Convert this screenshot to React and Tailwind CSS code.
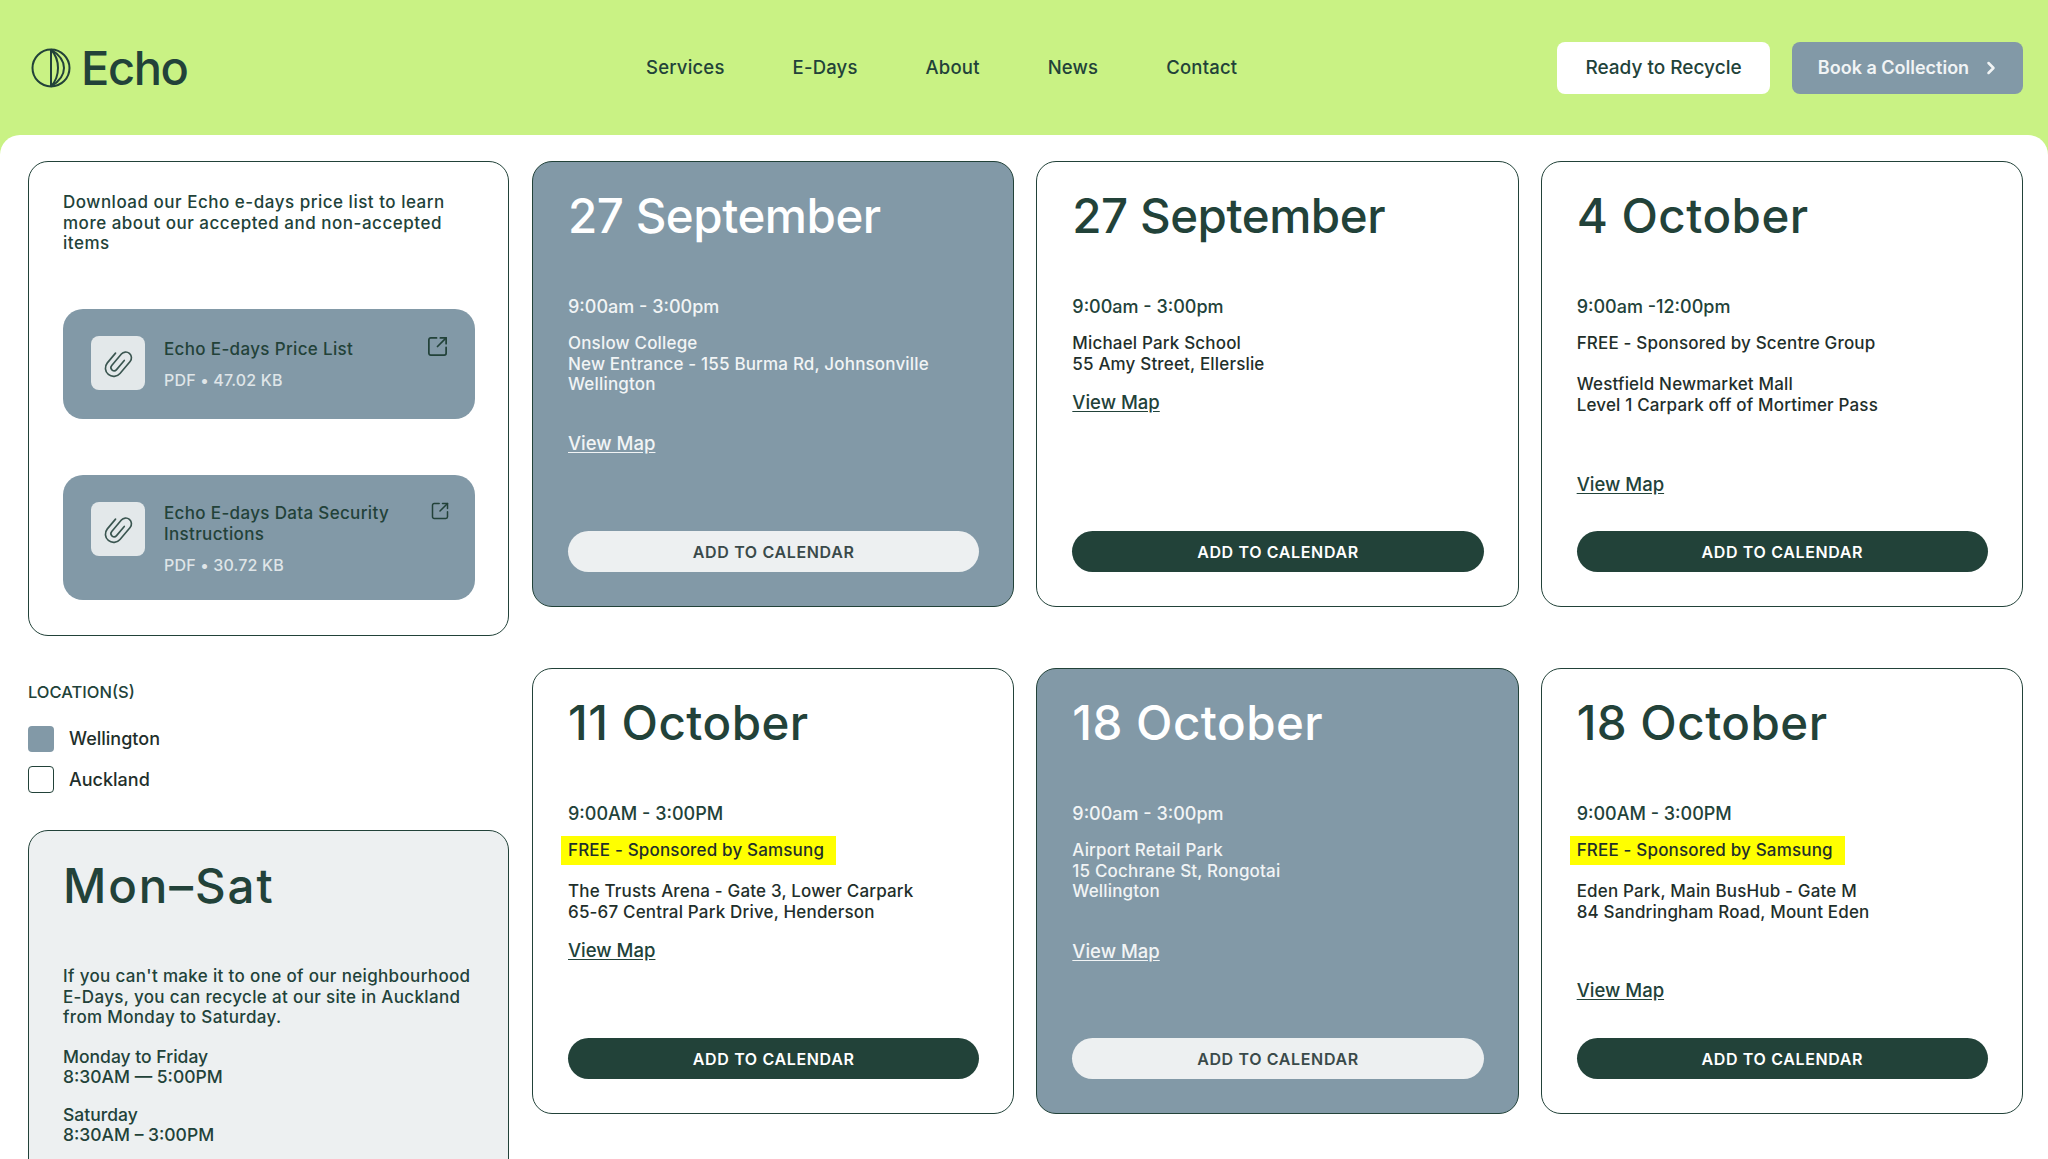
import { ChevronRight, SquareArrowOutUpRight } from 'lucide-react'

const navLinks = ['Services', 'E-Days', 'About', 'News', 'Contact']

const events = [
  {
    date: '27 September',
    time: '9:00am - 3:00pm',
    address: ['Onslow College', 'New Entrance - 155 Burma Rd, Johnsonville', 'Wellington'],
    mapGap: 'mt-[38px]',
    tinted: true,
  },
  {
    date: '27 September',
    time: '9:00am - 3:00pm',
    address: ['Michael Park School', '55 Amy Street, Ellerslie'],
    mapGap: 'mt-[18px]',
  },
  {
    date: '4 October',
    time: '9:00am -12:00pm',
    sponsor: 'FREE - Sponsored by Scentre Group',
    address: ['Westfield Newmarket Mall', 'Level 1 Carpark off of Mortimer Pass'],
    mapGap: 'mt-[59px]',
  },
  {
    date: '11 October',
    time: '9:00AM - 3:00PM',
    sponsor: 'FREE - Sponsored by Samsung',
    highlight: true,
    address: ['The Trusts Arena - Gate 3, Lower Carpark', '65-67 Central Park Drive, Henderson'],
    mapGap: 'mt-[18px]',
  },
  {
    date: '18 October',
    time: '9:00am - 3:00pm',
    address: ['Airport Retail Park', '15 Cochrane St, Rongotai', 'Wellington'],
    mapGap: 'mt-[39px]',
    tinted: true,
  },
  {
    date: '18 October',
    time: '9:00AM - 3:00PM',
    sponsor: 'FREE - Sponsored by Samsung',
    highlight: true,
    address: ['Eden Park, Main BusHub - Gate M', '84 Sandringham Road, Mount Eden'],
    mapGap: 'mt-[58px]',
  },
]

const Logo = () => (
  <svg width="40" height="40" viewBox="0 0 40 40" fill="none" stroke="#224239" strokeWidth="2">
    <circle cx="20" cy="20" r="18.5" />
    <path d="M20 1.5V38.5" />
    <path d="M20 1.5C25 7 27 13 27 20C27 27 25 33 20 38.5" />
    <path d="M20 1.5C29 7 33 13 33 20C33 27 29 33 20 38.5" />
  </svg>
)

const ClipIcon = () => (
  <svg width="36" height="36" viewBox="0 0 24 24" fill="none" stroke="#3a5550" strokeWidth="1.1" strokeLinecap="round">
    <path transform="rotate(40 12 12)" d="M6.5 8V16.5a5.5 5.5 0 0 0 11 0V6a3.8 3.8 0 0 0 -7.6 0V16a2.1 2.1 0 0 0 4.2 0V8" />
  </svg>
)

const DocCard = ({ title, meta, className, textClass, iconClass, iconSize }) => (
  <div className={`flex items-start bg-[#8299a7] rounded-[20px] pl-7 pr-[25px] pt-[27px] ${className}`}>
    <div className="w-[54px] h-[54px] shrink-0 rounded-lg bg-[#e3e8ea] flex items-center justify-center">
      <ClipIcon />
    </div>
    <div className={`ml-[19px] flex-1 min-w-0 ${textClass}`}>
      <p className="text-[17px] leading-[21px] font-medium tracking-[0.02em] text-[#224239]">{title}</p>
      <p className="text-[16px] leading-5 font-medium tracking-[0.01em] text-[#dfe5e8] mt-[10px]">{meta}</p>
    </div>
    <SquareArrowOutUpRight size={iconSize} strokeWidth={1.8} className={`text-[#224239] shrink-0 -mt-[1px] ${iconClass}`} />
  </div>
)

const EventCard = ({ event }) => {
  const { date, time, sponsor, highlight, address, mapGap, tinted } = event
  const bodyColor = tinted ? 'text-[#f1f4f5]' : 'text-[#1f2f2b]'
  const titleTracking = date.includes('October') ? 'tracking-[0.01em]' : 'tracking-[-0.01em]'

  return (
    <div className={`h-[446px] flex flex-col rounded-[20px] border border-[#224239] pl-[35px] pr-[34px] pb-[34px] pt-[26px]
      ${tinted ? 'bg-[#8299a7]' : 'bg-white'}`}>
      <h2 className={`text-[47.5px] leading-[56px] font-medium ${titleTracking} ${tinted ? 'text-white' : 'text-[#224239]'}`}>
        {date}
      </h2>
      <p className={`mt-[52px] text-[18px] leading-[21px] font-medium ${tinted ? 'text-[#f1f4f5]' : 'text-[#224239]'}`}>
        {time}
      </p>
      {sponsor && (
        <p className={`mt-[16px] text-[17px] leading-[21px] font-medium tracking-[0.01em] ${bodyColor}`}>
          {highlight
            ? <span className="inline-block bg-[#ffff00] -ml-[7px] pl-[7px] pr-[12px] py-[4px] -my-[4px]">{sponsor}</span>
            : sponsor}
        </p>
      )}
      <p className={`${sponsor ? 'mt-5' : 'mt-[16px]'} text-[17px] leading-[20.5px] font-medium tracking-[0.01em] ${bodyColor}`}>
        {address.map((line) => <span key={line} className="block">{line}</span>)}
      </p>
      <a href="#" className={`${mapGap} self-start text-[18.5px] leading-[21px] font-medium underline underline-offset-2
        ${tinted ? 'text-[#f1f4f5]' : 'text-[#224239]'}`}>
        View Map
      </a>
      <button className={`mt-auto h-[41px] rounded-full text-[16px] font-semibold tracking-[0.04em]
        ${tinted ? 'bg-[#edf0f1] text-[#3a4a4a]' : 'bg-[#224239] text-white'}`}>
        ADD TO CALENDAR
      </button>
    </div>
  )
}

const App = () => (
  <div className="h-screen overflow-hidden bg-[#c9f284] font-['Inter',sans-serif]">
    <header className="h-[135px] flex items-center pl-[31px] pr-[25px]">
      <div className="w-[615px] flex items-center gap-[10px]">
        <Logo />
        <span className="text-[47px] leading-none font-medium tracking-[-0.03em] text-[#224239]">Echo</span>
      </div>
      <nav className="flex gap-[68px] pt-px">
        {navLinks.map((link) => (
          <a key={link} href="#" className="text-[18.5px] font-medium tracking-[0.01em] text-[#224239]">{link}</a>
        ))}
      </nav>
      <div className="ml-auto flex gap-[22px]">
        <button className="w-[213px] h-[52px] pt-px rounded-lg bg-white text-[19px] font-medium text-[#224239]">
          Ready to Recycle
        </button>
        <button className="w-[231px] h-[52px] pl-[4px] rounded-lg bg-[#8299a7] flex items-center justify-center gap-3 text-[18px] font-semibold text-[#f1f4f5]">
          Book a Collection
          <ChevronRight size={20} strokeWidth={3} />
        </button>
      </div>
    </header>

    <main className="h-full bg-white rounded-t-[20px] pt-[26px] pl-7 pr-[25px] flex gap-[23px]">
      <aside className="w-[481px] shrink-0">
        <div className="h-[475px] rounded-[20px] border border-[#224239] pl-[34px] pr-[33px] pt-[30px]">
          <p className="text-[17px] leading-[20.5px] font-medium tracking-[0.03em] text-[#224239]">
            Download our Echo e-days price list to learn more about our accepted and non-accepted items
          </p>
          <DocCard
            title="Echo E-days Price List"
            meta="PDF • 47.02 KB"
            className="h-[110px] mt-[55px]"
            textClass="mt-[3px]"
            iconClass="mr-[1px]"
            iconSize={23}
          />
          <DocCard
            title="Echo E-days Data Security Instructions"
            meta="PDF • 30.72 KB"
            className="h-[125px] mt-[56px]"
            textClass="mt-px"
            iconClass="mr-0"
            iconSize={20}
          />
        </div>

        <p className="mt-[46px] text-[16.5px] leading-5 font-medium text-[#224239]">LOCATION(S)</p>
        <label className="mt-[23px] flex items-center gap-[15px]">
          <span className="w-[26px] h-[26px] rounded bg-[#8299a7]" />
          <span className="text-[18px] font-medium text-[#1f2f2b]">Wellington</span>
        </label>
        <label className="mt-[14px] flex items-center gap-[15px]">
          <span className="w-[26px] h-[27px] rounded border border-[#224239] bg-white" />
          <span className="text-[18px] font-medium text-[#1f2f2b]">Auckland</span>
        </label>

        <div className="mt-[37px] h-[500px] rounded-[20px] border border-[#224239] bg-[#edf0f1] px-[34px] pt-[27px]">
          <h2 className="text-[47.5px] leading-[56px] font-medium tracking-[0.04em] text-[#224239]">Mon–Sat</h2>
          <p className="mt-[52px] text-[17px] leading-[20.5px] font-medium tracking-[0.02em] text-[#224239]">
            If you can't make it to one of our neighbourhood E-Days, you can recycle at our site in Auckland from Monday to Saturday.
          </p>
          <p className="mt-[19px] text-[17.5px] leading-[20.5px] font-medium text-[#224239]">
            Monday to Friday<br />8:30AM — 5:00PM
          </p>
          <p className="mt-[17px] text-[17.5px] leading-[20.5px] font-medium text-[#224239]">
            Saturday<br />8:30AM – 3:00PM
          </p>
        </div>
      </aside>

      <section className="flex-1 min-w-0 grid grid-cols-3 gap-x-[22px] gap-y-[61px] content-start">
        {events.map((event, index) => (
          <EventCard key={`${event.date}-${index}`} event={event} />
        ))}
      </section>
    </main>
  </div>
)

export default App
